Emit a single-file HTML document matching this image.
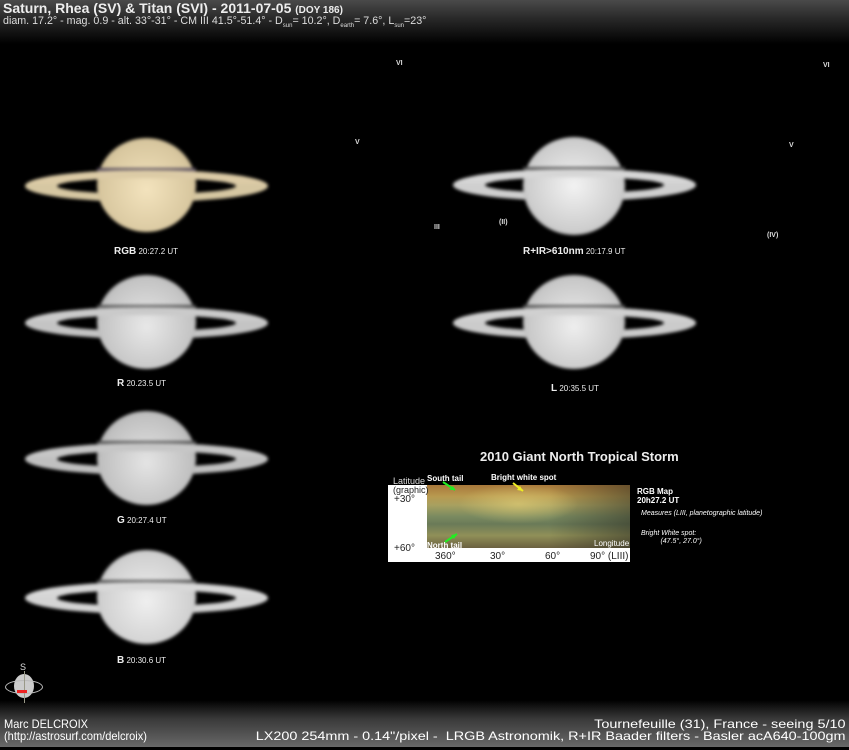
<!DOCTYPE html>
<html><head><meta charset="utf-8"><style>
html,body{margin:0;padding:0}
body{width:849px;height:750px;background:#000;position:relative;overflow:hidden;font-family:"Liberation Sans",sans-serif;color:#fff}
.hdr{position:absolute;left:0;top:0;width:849px;height:44px;background:linear-gradient(#4a4a4a,#2a2a2a 40%,#000)}
.ftr{position:absolute;left:0;top:700px;width:849px;height:48px;background:linear-gradient(#000,#3a3a3a 40%,#6a6a6a)}
.sat{position:absolute;width:243px;height:100px;filter:blur(1.6px)}
.ring{position:absolute;left:0;top:32px;width:243px;height:32px;box-sizing:border-box;border-radius:50%;border-style:solid;border-width:8px 32px}
.globe{position:absolute;left:72px;top:0;width:99px;height:94px;border-radius:50%}
.front{position:absolute;left:0;top:32px;width:243px;height:14px;overflow:hidden}
.front .ring{top:0}
.sh{position:absolute;left:72px;top:30px;width:99px;height:3px;background:#555}
.lbl{position:absolute;font-size:8px;color:#eee;white-space:nowrap}
.lbl b{font-size:10px}
.m{position:absolute;font-size:7px;color:#ddd;font-weight:bold}
</style></head><body>
<div class="hdr"></div>
<div style="position:absolute;left:3px;top:0px;font-size:14px;font-weight:bold;color:#eee">Saturn, Rhea (SV) &amp; Titan (SVI) - 2011-07-05 <span style="font-size:10px">(DOY 186)</span></div>
<div style="position:absolute;left:3px;top:15px;font-size:10.7px;color:#ddd">diam. 17.2° - mag. 0.9 - alt. 33°-31° - CM III 41.5°-51.4° - D<sub style="font-size:6px">sun</sub>= 10.2°, D<sub style="font-size:6px">earth</sub>= 7.6°, L<sub style="font-size:6px">sun</sub>=23°</div>

<!-- RGB -->
<div class="sat" style="left:25px;top:138px">
 <div class="ring" style="border-color:#d6c7a2"></div>
 <div class="globe" style="background:radial-gradient(ellipse at 50% 55%,#f3e3bd,#d8c79f 65%,#9a8c70);"></div>
 <div class="sh" style="background:#5a5060"></div>
 <div class="front"><div class="ring" style="border-color:#dccba6"></div></div>
</div>
<div class="lbl" style="left:114px;top:246px"><b>RGB</b> 20:27.2 UT</div>
<!-- R -->
<div class="sat" style="left:25px;top:275px">
 <div class="ring" style="border-color:#c4c4c4"></div>
 <div class="globe" style="background:radial-gradient(ellipse at 50% 55%,#e8e8e8,#c4c4c4 65%,#808080)"></div>
 <div class="sh"></div>
 <div class="front"><div class="ring" style="border-color:#cacaca"></div></div>
</div>
<div class="lbl" style="left:117px;top:378px"><b>R</b> 20.23.5 UT</div>
<!-- G -->
<div class="sat" style="left:25px;top:411px">
 <div class="ring" style="border-color:#c0c0c0"></div>
 <div class="globe" style="background:radial-gradient(ellipse at 50% 55%,#e4e4e4,#c0c0c0 65%,#7c7c7c)"></div>
 <div class="sh"></div>
 <div class="front"><div class="ring" style="border-color:#c6c6c6"></div></div>
</div>
<div class="lbl" style="left:117px;top:515px"><b>G</b> 20:27.4 UT</div>
<!-- B -->
<div class="sat" style="left:25px;top:550px">
 <div class="ring" style="border-color:#d4d4d4"></div>
 <div class="globe" style="background:radial-gradient(ellipse at 50% 55%,#efefef,#d0d0d0 65%,#888)"></div>
 <div class="sh"></div>
 <div class="front"><div class="ring" style="border-color:#d8d8d8"></div></div>
</div>
<div class="lbl" style="left:117px;top:655px"><b>B</b> 20:30.6 UT</div>
<!-- R+IR -->
<div class="sat" style="left:453px;top:137px">
 <div class="ring" style="border-color:#cfcfcf"></div>
 <div class="globe" style="left:70px;width:102px;height:98px;background:radial-gradient(ellipse at 50% 50%,#f2f2f2,#cdcdcd 65%,#888)"></div>
 <div class="sh" style="left:70px;width:102px"></div>
 <div class="front"><div class="ring" style="border-color:#d6d6d6"></div></div>
</div>
<div class="lbl" style="left:523px;top:246px"><b>R+IR&gt;610nm</b> 20:17.9 UT</div>
<!-- L -->
<div class="sat" style="left:453px;top:275px">
 <div class="ring" style="border-color:#cbcbcb"></div>
 <div class="globe" style="left:70px;width:102px;background:radial-gradient(ellipse at 50% 55%,#eeeeee,#c8c8c8 65%,#848484)"></div>
 <div class="sh" style="left:70px;width:102px"></div>
 <div class="front"><div class="ring" style="border-color:#d0d0d0"></div></div>
</div>
<div class="lbl" style="left:551px;top:383px"><b>L</b> 20:35.5 UT</div>

<!-- moons -->
<div class="m" style="left:396px;top:60px">VI</div>
<div class="m" style="left:355px;top:139px">V</div>
<div class="m" style="left:434px;top:224px">III</div>
<div class="m" style="left:499px;top:219px">(II)</div>
<div class="m" style="left:789px;top:142px">V</div>
<div class="m" style="left:823px;top:62px">VI</div>
<div class="m" style="left:767px;top:232px">(IV)</div>

<!-- Map -->
<div style="position:absolute;left:480px;top:449px;font-size:13px;font-weight:bold;color:#eee">2010 Giant North Tropical Storm</div>
<div style="position:absolute;left:388px;top:485px;width:242px;height:77px;background:#fff"></div>
<div style="position:absolute;left:427px;top:485px;width:203px;height:63px;background:linear-gradient(#a8783a,#b89a50 18%,#a8a060 32%,#7a8a60 50%,#6a7a58 62%,#909058 80%,#6a6040);"></div>
<div style="position:absolute;left:427px;top:485px;width:203px;height:63px;background:radial-gradient(ellipse 60px 20px at 45% 30%,rgba(230,210,120,.6),transparent),linear-gradient(90deg,rgba(0,0,0,0),rgba(0,0,0,0) 60%,rgba(40,40,30,.5))"></div>
<div style="position:absolute;left:393px;top:477px;font-size:9px;color:#ddd;line-height:9px">Latitude</div>
<div style="position:absolute;left:393px;top:486px;font-size:9px;color:#222;line-height:9px">(graphic)</div>
<div style="position:absolute;left:394px;top:494px;font-size:10px;color:#222">+30°</div>
<div style="position:absolute;left:394px;top:543px;font-size:10px;color:#222">+60°</div>
<div style="position:absolute;left:427px;top:474px;font-size:8px;font-weight:bold">South tail</div>
<div style="position:absolute;left:491px;top:473px;font-size:8px;font-weight:bold">Bright white spot</div>
<div style="position:absolute;left:427px;top:541px;font-size:8px;font-weight:bold">North tail</div>
<div style="position:absolute;left:594px;top:539px;font-size:8px;color:#fff">Longitude</div>
<div style="position:absolute;left:435px;top:551px;font-size:10px;color:#222">360°</div>
<div style="position:absolute;left:490px;top:551px;font-size:10px;color:#222">30°</div>
<div style="position:absolute;left:545px;top:551px;font-size:10px;color:#222">60°</div>
<div style="position:absolute;left:590px;top:551px;font-size:10px;color:#222">90° (LIII)</div>
<svg style="position:absolute;left:440px;top:480px" width="100" height="70"><path d="M3 2 L15 10" stroke="#2e2" stroke-width="2"/><path d="M15 10 l-6 0 l4-4z" fill="#2e2"/><path d="M73 3 L83 11" stroke="#ee2" stroke-width="2"/><path d="M83 11 l-6 -1 l3-4z" fill="#ee2"/><path d="M5 62 L17 54" stroke="#2e2" stroke-width="2"/><path d="M17 54 l-6 1 l3 4z" fill="#2e2"/></svg>
<div style="position:absolute;left:637px;top:487px;font-size:8px;font-weight:bold;line-height:9px">RGB Map<br>20h27.2 UT</div>
<div style="position:absolute;left:641px;top:510px;font-size:7px;font-style:italic">Measures (LIII, planetographic latitude)</div>
<div style="position:absolute;left:641px;top:530px;font-size:7px;font-style:italic;line-height:8px">Bright White spot:<br>&nbsp;&nbsp;&nbsp;&nbsp;&nbsp;&nbsp;&nbsp;&nbsp;&nbsp;&nbsp;(47.5°, 27.0°)</div>

<div class="ftr"></div>
<!-- compass -->
<div style="position:absolute;left:20px;top:662px;font-size:9px;color:#ddd">S</div>
<div style="position:absolute;left:14px;top:674px;width:20px;height:24px;border-radius:50%;background:#ccc"></div>
<div style="position:absolute;left:5px;top:680px;width:36px;height:12px;border:1px solid #bbb;border-radius:50%"></div>
<div style="position:absolute;left:24px;top:671px;width:1px;height:32px;background:#998"></div>
<div style="position:absolute;left:17px;top:690px;width:10px;height:3px;background:#e22"></div>

<div style="position:absolute;left:4px;top:718px;font-size:12px;color:#fff;line-height:12px;transform:scaleX(0.92);transform-origin:left">Marc DELCROIX<br>(http://astrosurf.com/delcroix)</div>
<div style="position:absolute;right:4px;top:718px;font-size:12px;color:#fff;line-height:12px;text-align:right;white-space:nowrap;transform:scaleX(1.2);transform-origin:right">Tournefeuille (31), France - seeing 5/10<br>LX200 254mm - 0.14"/pixel -&nbsp; LRGB Astronomik, R+IR Baader filters - Basler acA640-100gm</div>
<div style="position:absolute;left:0;top:747px;width:849px;height:3px;background:#000"></div>
</body></html>
